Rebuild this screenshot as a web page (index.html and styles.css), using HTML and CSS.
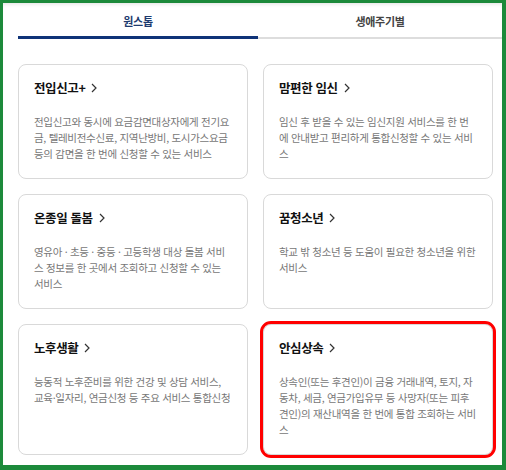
FILE: index.html
```html
<!DOCTYPE html>
<html lang="ko">
<head>
  <meta charset="UTF-8" />
  <meta name="viewport" content="width=device-width, initial-scale=1" />
  <title>원스톱 서비스</title>
  <link rel="stylesheet" href="styles.css">
</head>
<body>
  <div class="frame">
    <div class="tabs">
      <div class="tab active">원스톱</div>
      <div class="tab">생애주기별</div>
    </div>

    <div class="cards">
      <div class="card">
        <div class="card-title">전입신고+ <svg class="chev" viewBox="0 0 6 10"><polyline points="1,1 5,5 1,9" /></svg></div>
        <p class="card-desc">전입신고와 동시에 요금감면대상자에게 전기요금, 텔레비전수신료, 지역난방비, 도시가스요금 등의 감면을 한 번에 신청할 수 있는 서비스</p>
      </div>
      <div class="card">
        <div class="card-title">맘편한 임신 <svg class="chev" viewBox="0 0 6 10"><polyline points="1,1 5,5 1,9" /></svg></div>
        <p class="card-desc">임신 후 받을 수 있는 임신지원 서비스를 한 번에 안내받고 편리하게 통합신청할 수 있는 서비스</p>
      </div>
      <div class="card">
        <div class="card-title">온종일 돌봄 <svg class="chev" viewBox="0 0 6 10"><polyline points="1,1 5,5 1,9" /></svg></div>
        <p class="card-desc">영유아 · 초등 · 중등 · 고등학생 대상 돌봄 서비스 정보를 한 곳에서 조회하고 신청할 수 있는 서비스</p>
      </div>
      <div class="card">
        <div class="card-title">꿈청소년 <svg class="chev" viewBox="0 0 6 10"><polyline points="1,1 5,5 1,9" /></svg></div>
        <p class="card-desc">학교 밖 청소년 등 도움이 필요한 청소년을 위한 서비스</p>
      </div>
      <div class="card">
        <div class="card-title">노후생활 <svg class="chev" viewBox="0 0 6 10"><polyline points="1,1 5,5 1,9" /></svg></div>
        <p class="card-desc">능동적 노후준비를 위한 건강 및 상담 서비스, 교육·일자리, 연금신청 등 주요 서비스 통합신청</p>
      </div>
      <!-- highlighted card -->
      <div class="card marked">
        <div class="card-title">안심상속 <svg class="chev" viewBox="0 0 6 10"><polyline points="1,1 5,5 1,9" /></svg></div>
        <p class="card-desc">상속인(또는 후견인)이 금융 거래내역, 토지, 자동차, 세금, 연금가입유무 등 사망자(또는 피후견인)의 재산내역을 한 번에 통합 조회하는 서비스</p>
      </div>
    </div>
  </div>
</body>
</html>
```

FILE: styles.css
```css
html, body {
  margin: 0;
  height: 100%;
}
body {
  font-family: "Noto Sans CJK KR", "Noto Sans", sans-serif;
  background: #fff;
}
.frame {
  box-sizing: border-box;
  height: 470px;
  border-style: solid;
  border-color: #1c8a3b;
  border-width: 3px 4px 5px 3px;
  box-shadow: inset 0 4px 4px -3px rgba(0,0,0,0.12);
  overflow: hidden;
}
.tabs {
  display: flex;
  padding-left: 15px;
}
.tab {
  height: 33px;
  line-height: 36px;
  text-align: center;
  font-size: 11px;
  font-weight: 700;
  letter-spacing: -0.3px;
  color: #444;
  border-bottom: 2px solid #ddd;
  padding-bottom: 1px;
  flex: 244px 0 0;
}
.tab.active {
  flex-basis: 240px;
  color: #1d3a6e;
  border-bottom: 3px solid #0f3378;
  padding-bottom: 0;
}
.cards {
  display: grid;
  grid-template-columns: 230px 230px;
  column-gap: 15px;
  row-gap: 15px;
  padding: 25px 0 0 15px;
}
.card {
  border: 1px solid #d9d9d9;
  border-radius: 8px;
  padding: 14px 15px 16px;
  min-height: 83px;
}
.card.marked {
  outline: 3px solid #f00;
  outline-offset: 0;
}
.card-title {
  font-size: 12.5px;
  font-weight: 700;
  letter-spacing: -0.4px;
  line-height: 18px;
  color: #111;
  display: flex;
  align-items: center;
}
.chev {
  width: 6px;
  height: 10px;
  margin-left: 6px;
  fill: none;
  stroke: #333;
  stroke-width: 1.2;
}
.card-desc {
  margin: 17px 0 0;
  font-size: 10.5px;
  letter-spacing: -0.3px;
  line-height: 16px;
  color: #777;
}
```
